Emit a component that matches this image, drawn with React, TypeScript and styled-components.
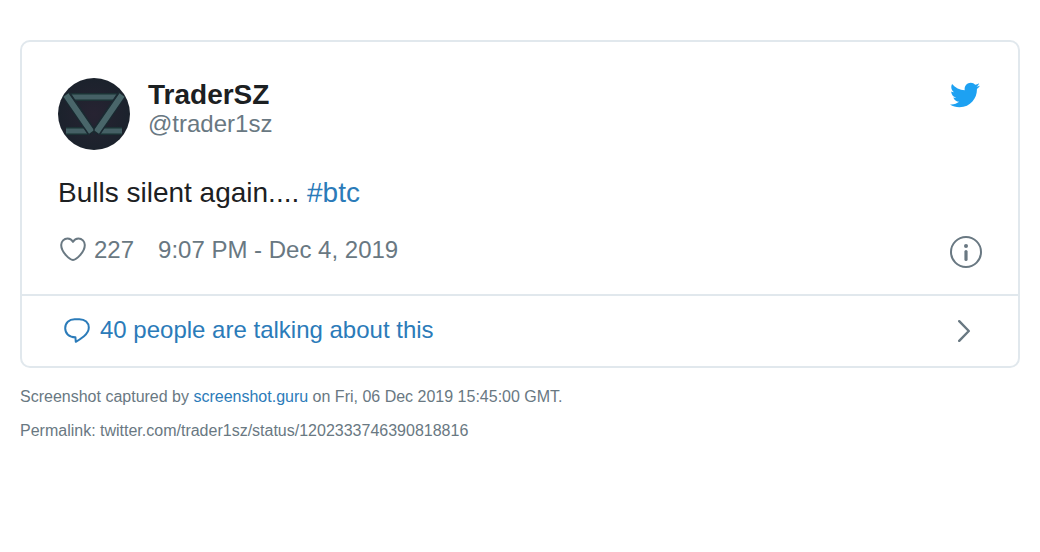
import React from "react";
import styled, { createGlobalStyle } from "styled-components";
import { FaTwitter } from "react-icons/fa";

const colors = {
  text: "#1c2022",
  muted: "#697882",
  link: "#2b7bb9",
  border: "#e1e8ed",
  brand: "#1da1f2",
};

const GlobalStyle = createGlobalStyle`
  * { box-sizing: border-box; }
  body {
    margin: 0;
    background: #fff;
    color: ${colors.muted};
    font-family: "Liberation Sans", Arial, sans-serif;
  }
`;

const Page = styled.main`
  padding: 40px 20px;
`;

const Card = styled.article`
  border: 2px solid ${colors.border};
  border-radius: 10px;
`;

const Body = styled.div`
  padding: 36px 36px 26px;
`;

const Header = styled.header`
  display: flex;
  justify-content: space-between;
  align-items: flex-start;
`;

const Link = styled.a<{ $tone?: "link" | "muted" }>`
  color: ${({ $tone = "link" }) => colors[$tone]};
  text-decoration: none;
`;

const Author = styled(Link)`
  display: flex;
  gap: 18px;
`;

const Avatar = styled.svg`
  width: 72px;
  height: 72px;
  border-radius: 50%;
`;

const Names = styled.div`
  display: flex;
  flex-direction: column;
`;

const Name = styled.strong`
  color: ${colors.text};
  font-size: 28px;
  line-height: 34px;
`;

const Handle = styled.span`
  color: ${colors.muted};
  font-size: 24px;
  line-height: 24px;
`;

const Brand = styled(Link)`
  display: flex;
  padding: 2px;
  color: ${colors.brand};
`;

const Tweet = styled.p`
  margin: 24px 0;
  color: ${colors.text};
  font-size: 28px;
  line-height: 38px;
`;

const Meta = styled.div`
  display: flex;
  align-items: flex-start;
  gap: 24px;
  font-size: 24px;
  line-height: 28px;
`;

const Likes = styled(Link)`
  display: flex;
  align-items: flex-start;
  gap: 6px;
  padding-left: 2px;
`;

const InfoLink = styled(Link)`
  display: flex;
  margin-left: auto;
`;

const Replies = styled(Link)`
  display: flex;
  align-items: center;
  gap: 10px;
  height: 72px;
  padding: 0 46px 2px 42px;
  border-top: 2px solid ${colors.border};
  font-size: 24px;
  line-height: 28px;
`;

const RepliesText = styled.span`
  flex: 1;
`;

const Caption = styled.footer`
  display: flex;
  flex-direction: column;
  gap: 16px;
  margin-top: 20px;
  font-size: 16px;
  line-height: 18px;
`;

const Line = styled.p`
  margin: 0;
`;

const AvatarArt = () => (
  <Avatar viewBox="0 0 72 72" role="img" aria-label="TraderSZ">
    <defs>
      <radialGradient id="avatarShade">
        <stop offset="0" stopColor="#272332" />
        <stop offset="1" stopColor="#1b222c" />
      </radialGradient>
      <filter id="avatarSoft">
        <feGaussianBlur stdDeviation="0.7" />
      </filter>
    </defs>
    <rect width="72" height="72" fill="url(#avatarShade)" />
    <g filter="url(#avatarSoft)" fill="none">
      <path d="M12 19H60M8 53H30M42 53H64" stroke="#1b3035" strokeWidth="8" />
      <path d="M13 19H59M8 53H30M42 53H64" stroke="#456165" strokeWidth="5" />
      <path d="M8 16L34 55M64 16L38 55" stroke="#1a2a31" strokeWidth="9" />
      <path d="M8 17L33.5 54M64 17L38.5 54" stroke="#4a666a" strokeWidth="6" />
      <path d="M36 49V57" stroke="#1a2a31" strokeWidth="1" />
    </g>
  </Avatar>
);

const Heart = () => (
  <svg width="28" height="28" viewBox="0 0 28 28" fill="none" stroke={colors.muted} strokeWidth="2" strokeLinejoin="round" aria-hidden="true">
    <path d="M13 24C9.8 23.9 1.2 16.2 1.2 9C1.2 5.4 4.1 2.4 7.5 2.4C10.3 2.4 12.1 4.2 13 5.9C13.9 4.2 15.7 2.4 18.5 2.4C21.9 2.4 24.8 5.4 24.8 9C24.8 16.2 16.2 23.9 13 24Z" />
  </svg>
);

const Info = () => (
  <svg width="32" height="32" viewBox="0 0 32 32" fill="none" aria-hidden="true">
    <circle cx="16" cy="16" r="15" stroke={colors.muted} strokeWidth="2" />
    <circle cx="16" cy="10" r="2" fill={colors.muted} />
    <path d="M16 15.5V23.5" stroke={colors.muted} strokeWidth="3.2" strokeLinecap="round" />
  </svg>
);

const Bubble = () => (
  <svg width="26" height="28" viewBox="0 0 26 28" fill="none" stroke={colors.link} strokeWidth="2" strokeLinejoin="round" aria-hidden="true">
    <path d="M11.4 21.2C5 21.2 1.2 17.4 1.2 12.2C1.2 6.8 5 3.2 10.6 3.2H15.4C21 3.2 24.8 6.8 24.8 11.6C24.8 15 23.2 17.6 20 20.2C17.6 22.1 14.8 24.2 11.8 25.8Z" />
  </svg>
);

const Chevron = () => (
  <svg width="14" height="24" viewBox="0 0 14 24" fill="none" stroke={colors.muted} strokeWidth="2.4" strokeLinecap="round" strokeLinejoin="round" aria-hidden="true">
    <path d="M1.2 3.2L10.8 13L1.2 22.8" />
  </svg>
);

export default function App() {
  return (
    <>
      <GlobalStyle />
      <Page>
        <Card>
          <Body>
            <Header>
              <Author href="#profile">
                <AvatarArt />
                <Names>
                  <Name>TraderSZ</Name>
                  <Handle>@trader1sz</Handle>
                </Names>
              </Author>
              <Brand href="#tweet" aria-label="View on Twitter">
                <FaTwitter size={30} />
              </Brand>
            </Header>
            <Tweet>
              Bulls silent again.... <Link href="#btc">#btc</Link>
            </Tweet>
            <Meta>
              <Likes href="#like" $tone="muted">
                <Heart />
                <span>227</span>
              </Likes>
              <Link href="#tweet" $tone="muted">
                <time dateTime="2019-12-04T21:07">9:07 PM - Dec 4, 2019</time>
              </Link>
              <InfoLink href="#info" aria-label="Twitter Ads info and privacy">
                <Info />
              </InfoLink>
            </Meta>
          </Body>
          <Replies href="#replies">
            <Bubble />
            <RepliesText>40 people are talking about this</RepliesText>
            <Chevron />
          </Replies>
        </Card>
        <Caption>
          <Line>
            Screenshot captured by <Link href="#guru">screenshot.guru</Link> on Fri, 06 Dec 2019 15:45:00 GMT.
          </Line>
          <Line>Permalink: twitter.com/trader1sz/status/1202333746390818816</Line>
        </Caption>
      </Page>
    </>
  );
}
